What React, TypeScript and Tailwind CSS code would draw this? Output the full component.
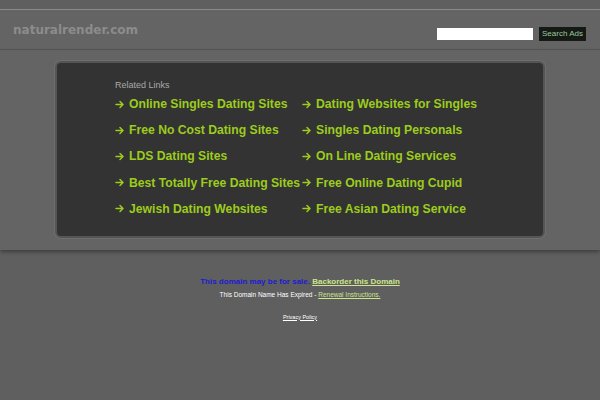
const LINKS: [string, string][] = [
  ["Online Singles Dating Sites", "Dating Websites for Singles"],
  ["Free No Cost Dating Sites", "Singles Dating Personals"],
  ["LDS Dating Sites", "On Line Dating Services"],
  ["Best Totally Free Dating Sites", "Free Online Dating Cupid"],
  ["Jewish Dating Websites", "Free Asian Dating Service"],
];

function Arrow() {
  return (
    <svg width="9" height="9" viewBox="0 0 9 9" fill="none" stroke="#9ccc1c" strokeWidth="1.5" strokeLinecap="round" strokeLinejoin="round">
      <path d="M1 4.5h7M5 1.5l3 3-3 3" />
    </svg>
  );
}

function LinkItem({ label }: { label: string }) {
  return (
    <a href="#" className="flex items-center gap-[5px] whitespace-nowrap text-[12.2px] font-bold text-[#9ccc1c] leading-none">
      <Arrow />
      <span>{label}</span>
    </a>
  );
}

export default function App() {
  return (
    <div className="h-[400px] w-[600px] bg-[#5f5f5f] font-['Liberation_Sans',Arial,sans-serif] overflow-hidden">
      <div className="h-[10px] border-b border-[#8a8a8a]" />
      <header className="flex h-[40px] items-center justify-between border-b border-[#575757] bg-[#646464] pl-[13px] pr-[14px]">
        <span className="font-['DejaVu_Sans',sans-serif] text-[12px] font-bold text-[#8c8c8c]">
          naturalrender.com
        </span>
        <div className="flex items-center gap-[6px] mt-[8px]">
          <input className="h-[12px] w-[96px] bg-white border-0 outline-none" />
          <button className="h-[14px] w-[47px] bg-[#151a15] text-[8px] leading-none text-[#9cc79c]">
            Search Ads
          </button>
        </div>
      </header>
      <section className="bg-[#646464] pt-[11px] pb-[12px] shadow-[0_2px_4px_rgba(0,0,0,0.35)]">
        <div className="mx-auto w-[490px] h-[177px] rounded-[6px] border-[2px] border-[#555555] bg-[#333333] shadow-[0_0_0_1px_#6e6e6e] pl-[58px] pt-[18px]">
          <div className="text-[9px] text-[#a8a8a8] leading-none mb-[8px]">Related Links</div>
          <div className="flex flex-col gap-[14px]">
            {LINKS.map(([a, b]) => (
              <div key={a} className="flex">
                <div className="w-[187px]">
                  <LinkItem label={a} />
                </div>
                <LinkItem label={b} />
              </div>
            ))}
          </div>
        </div>
      </section>
      <div className="pt-[28px] flex flex-col items-center text-center">
        <div className="text-[8px] font-bold leading-none">
          <span className="text-[#1c1cd4]">This domain may be for sale. </span>
          <a href="#" className="text-[#cde58a] underline">Backorder this Domain</a>
        </div>
        <div className="mt-[6px] text-[6.5px] leading-none text-white">
          This Domain Name Has Expired -{" "}
          <a href="#" className="text-[#cde58a] underline">Renewal Instructions.</a>
        </div>
        <a href="#" className="mt-[16px] text-[5.5px] leading-none text-white underline">Privacy Policy</a>
      </div>
    </div>
  );
}
